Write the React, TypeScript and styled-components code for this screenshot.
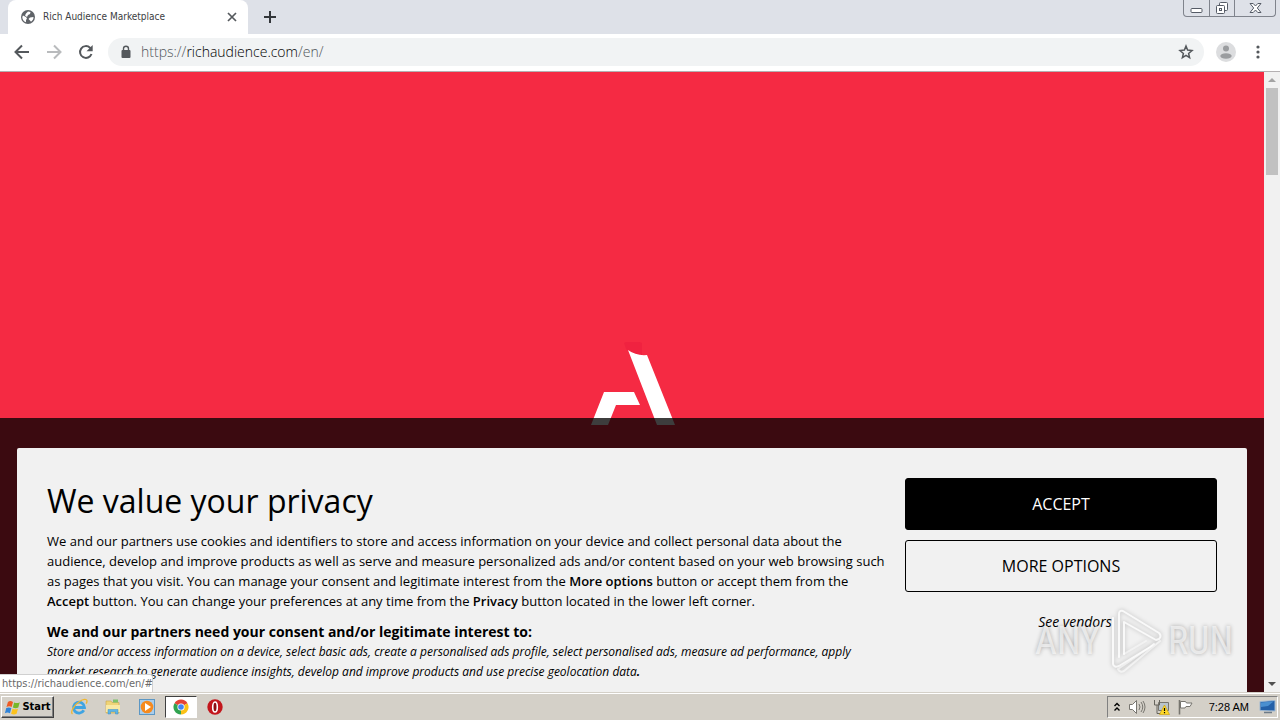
import React from "react";
import styled, { createGlobalStyle, css } from "styled-components";

const uiFont = '"Liberation Sans", Arial, sans-serif';
const tahomaLike = '"DejaVu Sans Condensed", "DejaVu Sans", Tahoma, sans-serif';

const GlobalStyle = createGlobalStyle`
  *, *::before, *::after { box-sizing: border-box; }
  body { margin: 0; background: #f1f1f1; }
  button, input { font: inherit; color: inherit; }
  svg { display: block; flex: none; }
`;

const Desktop = styled.div`
  display: flex;
  flex-direction: column;
  height: 100vh;
  overflow: hidden;
  font-family: ${tahomaLike};
`;

const PlainButton = styled.button`
  display: flex;
  align-items: center;
  justify-content: center;
  flex: none;
  padding: 0;
  border: 0;
  background: none;
`;

const TabStrip = styled.header`
  display: flex;
  align-items: flex-start;
  height: 34px;
  flex: none;
  padding-left: 8px;
  background: #dee1e8;
`;

const Tab = styled.div`
  display: flex;
  align-items: center;
  width: 240px;
  height: 34px;
  padding: 0 9px 0 13px;
  border-radius: 8px 8px 0 0;
  background: #fff;
`;

const TabTitle = styled.span`
  flex: 1;
  margin-left: 8px;
  white-space: nowrap;
  font-size: 10px;
  line-height: 16px;
  color: #3c4043;
`;

const NewTab = styled(PlainButton)`
  width: 28px;
  height: 34px;
  margin-left: 8px;
`;

const WindowControls = styled.div`
  display: flex;
  height: 17px;
  margin-left: auto;
  margin-right: 4px;
  border: 1px solid #7f838c;
  border-top: 0;
  border-radius: 0 0 4px 4px;
`;

const WindowButton = styled(PlainButton)<{ $wide?: boolean }>`
  width: ${(p) => (p.$wide ? 41 : 25)}px;
  & + & { border-left: 1px solid #7f838c; }
`;

const Toolbar = styled.nav`
  display: flex;
  align-items: center;
  height: 38px;
  flex: none;
  padding: 0 6px 1px;
  border-bottom: 1px solid #b4b0b2;
  background: #fff;
`;

const ToolButton = styled(PlainButton)`
  width: 32px;
  height: 32px;
`;

const AddressBar = styled.div`
  display: flex;
  align-items: center;
  flex: 1;
  height: 28px;
  margin: 0 6px 0 6px;
  padding: 0 9px 0 12px;
  border-radius: 14px;
  background: #f1f3f4;
`;

const Address = styled.a`
  flex: 1;
  margin-left: 9px;
  font-family: "Open Sans", sans-serif;
  font-weight: 300;
  font-size: 14px;
  line-height: 20px;
  color: #50555a;
  text-decoration: none;
  b { font-weight: 300; color: #000; }
`;

const Viewport = styled.main`
  display: flex;
  flex: 1;
  min-height: 0;
`;

const Page = styled.div`
  position: relative;
  display: flex;
  flex: 1;
  justify-content: center;
  min-width: 0;
  overflow: hidden;
  background: #f52a43;
`;

const BrandMark = styled.svg`
  margin-top: 270px;
`;

const Scrollbar = styled.div`
  display: flex;
  flex-direction: column;
  align-items: center;
  width: 16px;
  flex: none;
  background: #f1f1f1;
`;

const ScrollThumb = styled.div`
  width: 12px;
  height: 87px;
  margin-bottom: auto;
  background: #c1c1c1;
`;

const ScrollArrow = styled(PlainButton)`
  width: 16px;
  height: 16px;
`;

const Backdrop = styled.section`
  position: absolute;
  top: 346px;
  right: 0;
  bottom: 0;
  left: 0;
  padding: 30px 17px 0;
  background: rgba(0, 0, 0, 0.76);
`;

const Card = styled.div`
  display: flex;
  gap: 20px;
  height: 100%;
  padding: 30px;
  overflow: hidden;
  border-radius: 2px 2px 0 0;
  background: #f1f1f1;
  font-family: "Open Sans", sans-serif;
  color: #000;
`;

const Copy = styled.div`
  flex: 1;
  min-width: 0;
`;

const Heading = styled.h1`
  margin: 0 0 8px;
  font-weight: 400;
  font-size: 32px;
  line-height: 45px;
`;

const Body = styled.p`
  margin: 0 0 11px;
  font-size: 13px;
  line-height: 20px;
  b { font-weight: 600; }
`;

const Line = styled.span`
  display: block;
  white-space: nowrap;
`;

const Purpose = styled.h2`
  margin: 0;
  font-weight: 700;
  font-size: 14px;
  line-height: 20px;
`;

const Purposes = styled.p`
  margin: 0;
  font-size: 12px;
  line-height: 20px;
  font-style: italic;
`;

const Actions = styled.div`
  display: flex;
  flex-direction: column;
  gap: 10px;
  width: 312px;
  flex: none;
`;

const ActionButton = styled.button<{ $primary?: boolean }>`
  height: 52px;
  padding: 0;
  border: 1px solid #000;
  border-radius: 3px;
  font-size: 16px;
  line-height: 24px;
  ${(p) =>
    p.$primary
      ? css`background: #000; color: #fff;`
      : css`background: transparent; color: #000;`}
`;

const VendorsLink = styled.a`
  align-self: center;
  margin-top: 10px;
  margin-left: 28px;
  font-size: 14px;
  line-height: 20px;
  font-style: italic;
  color: #000;
  text-decoration: none;
`;

const StatusBubble = styled.div`
  position: absolute;
  left: 0;
  bottom: 0;
  width: 153px;
  height: 18px;
  padding-left: 2px;
  border-top: 1px solid #d0d0d0;
  border-right: 1px solid #d0d0d0;
  border-radius: 0 3px 0 0;
  background: #fff;
  font-size: 11px;
  line-height: 17px;
  white-space: nowrap;
  color: #6a6a6a;
`;

const Watermark = styled.div`
  position: absolute;
  right: 31px;
  bottom: 18px;
  display: flex;
  align-items: center;
  gap: 6px;
  font-family: "Liberation Sans Narrow", "Roboto Condensed", sans-serif;
  font-size: 38px;
  line-height: 66px;
  color: rgba(255, 255, 255, 0.6);
  text-shadow: 0 0 4px rgba(0, 0, 0, 0.3);
  pointer-events: none;
  svg { filter: drop-shadow(0 0 2px rgba(0, 0, 0, 0.3)); }
`;

const Taskbar = styled.footer`
  display: flex;
  align-items: center;
  height: 28px;
  flex: none;
  padding: 1px 2px 0 1px;
  border-top: 1px solid #d4d0c8;
  box-shadow: inset 0 1px 0 #fff;
  background: #d4d0c8;
`;

const StartButton = styled(PlainButton)`
  width: 53px;
  height: 22px;
  border: 1px solid;
  border-color: #fff #404040 #404040 #fff;
  box-shadow: inset -1px -1px 0 #808080;
  font-weight: 700;
  font-size: 11px;
  line-height: 16px;
  color: #000;
`;

const Shortcuts = styled.div`
  display: flex;
  gap: 2px;
  margin-left: 9px;
`;

const Shortcut = styled(PlainButton)<{ $active?: boolean }>`
  width: 32px;
  height: 22px;
  ${(p) =>
    p.$active &&
    css`
      border: 1px solid;
      border-color: #404040 #fff #fff #404040;
      background: #fff;
    `}
`;

const Tray = styled.div`
  display: flex;
  align-items: center;
  height: 22px;
  margin-left: auto;
  padding: 0 1px 0 5px;
  gap: 7px;
  border: 1px solid;
  border-color: #808080 #fff #fff #808080;
`;

const Clock = styled.time`
  margin: 0 3px 0 8px;
  font-family: ${uiFont};
  font-size: 11px;
  line-height: 16px;
  color: #000;
`;

const Globe = () => (
  <svg width="14" height="14" viewBox="0 0 14 14">
    <circle cx="7" cy="7" r="7" fill="#5f6368" />
    <path d="M2 5.500 5 7l1 1.500L5 10v2.200C2.700 11.500 1.300 9.500 1.300 7Zm5-4L9.500 2 9 4 7 5 6 7 4 5.500 5 3.500Zm2 6 3.500-.5c.2 2-1 3.800-2.500 4.700L9 10.500 7.500 9Z" fill="#fff" />
  </svg>
);

const WindowsFlag = () => (
  <svg width="18" height="17" viewBox="0 0 16 15">
    <path d="M3.500 2.500C5 1.500 6.500 1.700 8 2.500L6.800 7C5.300 6.200 3.800 6.200 2.200 7Z" fill="#ee5b24" />
    <path d="M9 3c1.700.8 3.300.8 5-.2l-1.300 4.700c-1.600.9-3.200.8-4.800 0Z" fill="#76b82a" />
    <path d="M2 8c1.500-.8 3-.8 4.500 0l-1.200 4.500C3.800 11.700 2.300 11.700.8 12.500Z" fill="#2f83d8" />
    <path d="M7.600 8.500c1.600.8 3.200.9 4.800 0l-1.200 4.500c-1.700 1-3.300.8-4.900 0Z" fill="#fcc21b" />
  </svg>
);

const IeIcon = () => (
  <svg width="18" height="18" viewBox="0 0 18 18">
    <path d="M13.800 12.300A5.500 5.500 0 1 1 14.500 9.500H5" fill="none" stroke="#3fa4e2" strokeWidth="2.800" />
    <path d="M2.500 16C0 14 4 7 9.500 3.500 13 1.200 17 .5 17 3c0 .8-.3 1.700-.8 2.600" fill="none" stroke="#f0b72f" strokeWidth="1.300" />
  </svg>
);

const FolderIcon = () => (
  <svg width="18" height="18" viewBox="0 0 18 18">
    <path d="M2 3h5l1 1.500h7V15H2Z" fill="#efd477" stroke="#c9a548" strokeWidth=".6" />
    <path d="M9 1.500h5v3H9Z" fill="#7fc26a" />
    <path d="M2 7h14v7H2Z" fill="#f9e9a4" />
    <path d="M4 16v-4.500h10V16h-2.500v-2.300h-5V16Z" fill="#5eb5e6" stroke="#3f8fc4" strokeWidth=".5" />
  </svg>
);

const MediaIcon = () => (
  <svg width="18" height="18" viewBox="0 0 18 18">
    <rect x="1.500" y="1.500" width="15" height="15" fill="#a9cdec" stroke="#5c97c4" />
    <circle cx="9" cy="9" r="6.300" fill="#f58a1f" />
    <path d="m7 5 6 4-6 4Z" fill="#fff" />
  </svg>
);

const ChromeIcon = () => (
  <svg width="16" height="16" viewBox="0 0 16 16">
    <path d="M8 8 1.500 4.250A7.500 7.500 0 0 1 14.500 4.250Z" fill="#e54335" />
    <path d="M8 8 1.500 4.250A7.500 7.500 0 0 0 8 15.500Z" fill="#31a350" />
    <path d="M8 8 14.500 4.250A7.500 7.500 0 0 1 8 15.500Z" fill="#fbc116" />
    <circle cx="8" cy="8" r="3.600" fill="#fff" />
    <circle cx="8" cy="8" r="2.800" fill="#4384f3" />
  </svg>
);

const OperaIcon = () => (
  <svg width="16" height="16" viewBox="0 0 16 16">
    <circle cx="8" cy="8" r="7.700" fill="#c3161c" />
    <ellipse cx="8" cy="8" rx="2.300" ry="5" fill="#8e0d12" stroke="#fff" strokeWidth="1.600" />
  </svg>
);

const PlayMark = () => (
  <svg width="56" height="66" viewBox="0 0 56 66" fill="none" stroke="#fff" strokeOpacity=".8" strokeWidth="2" strokeLinecap="round" strokeLinejoin="round">
    <path d="M13 49V6q0-4 4-3l36 22q3 3 0 6L50 32 18 14v32" />
    <path d="M7 10v46q1 4 6 2L44 39 48 36" />
    <path d="M54 33 18 63q-4 2-6-2l34-23" strokeOpacity=".6" />
    <path d="M18 46 40 33" strokeOpacity=".5" />
  </svg>
);

export default function App() {
  return (
    <Desktop>
      <GlobalStyle />
      <TabStrip>
        <Tab>
          <Globe />
          <TabTitle>Rich Audience Marketplace</TabTitle>
          <PlainButton aria-label="Close tab">
            <svg width="14" height="14" viewBox="0 0 14 14">
              <path d="m3 3 8 8m0-8-8 8" stroke="#55595d" strokeWidth="1.700" />
            </svg>
          </PlainButton>
        </Tab>
        <NewTab aria-label="New tab">
          <svg width="14" height="14" viewBox="0 0 14 14">
            <path d="M7 1v12M1 7h12" stroke="#33363a" strokeWidth="2" />
          </svg>
        </NewTab>
        <WindowControls>
          <WindowButton aria-label="Minimize">
            <svg width="13" height="16" viewBox="0 0 13 16">
              <rect x="1" y="8.500" width="11" height="4" rx="1" fill="#fff" stroke="#555b66" />
            </svg>
          </WindowButton>
          <WindowButton aria-label="Restore">
            <svg width="14" height="16" viewBox="0 0 14 16">
              <rect x="4.500" y="2.500" width="8" height="8" rx="1" fill="#fff" stroke="#555b66" />
              <rect x="1.500" y="5.500" width="8" height="8" rx="1" fill="#fff" stroke="#555b66" />
              <rect x="4.500" y="8.500" width="2" height="2" fill="#fff" stroke="#555b66" />
            </svg>
          </WindowButton>
          <WindowButton $wide aria-label="Close">
            <svg width="13" height="16" viewBox="0 0 13 16">
              <path d="M1 3.500h3.200L6.500 6l2.300-2.500H12L8.300 8l3.700 4.500H8.800L6.500 10l-2.300 2.500H1L4.700 8Z" fill="#fff" stroke="#555b66" />
            </svg>
          </WindowButton>
        </WindowControls>
      </TabStrip>

      <Toolbar>
        <ToolButton aria-label="Back">
          <svg width="16" height="16" viewBox="0 0 16 16" fill="none" stroke="#54585c" strokeWidth="2">
            <path d="M15 8H2M8 1.500 1.500 8 8 14.500" />
          </svg>
        </ToolButton>
        <ToolButton aria-label="Forward">
          <svg width="16" height="16" viewBox="0 0 16 16" fill="none" stroke="#b9bbbd" strokeWidth="2">
            <path d="M1 8h13M8 1.500 14.500 8 8 14.500" />
          </svg>
        </ToolButton>
        <ToolButton aria-label="Reload">
          <svg width="16" height="16" viewBox="0 0 16 16">
            <path d="M13.500 10A5.900 5.900 0 1 1 12 3.700L13 4.800" fill="none" stroke="#54585c" strokeWidth="2" />
            <path d="M14.700 1v6.300H8.500Z" fill="#54585c" />
          </svg>
        </ToolButton>
        <AddressBar>
          <svg width="12" height="14" viewBox="0 0 12 14">
            <rect x="1.500" y="5" width="9" height="8" rx="1" fill="#54585c" />
            <path d="M3.500 6V3.700a2.500 2.500 0 0 1 5 0V6" fill="none" stroke="#54585c" strokeWidth="1.400" />
          </svg>
          <Address href="#">https://<b>richaudience.com</b>/en/</Address>
          <PlainButton aria-label="Bookmark this page">
            <svg width="18" height="18" viewBox="0 0 18 18">
              <path d="m9 3 1.600 4.100 4.400.4-3.400 2.900 1 4.300L9 12.400l-3.600 2.300 1-4.300L3 7.500l4.400-.4Z" fill="none" stroke="#54585c" strokeWidth="1.500" />
            </svg>
          </PlainButton>
        </AddressBar>
        <ToolButton aria-label="Profile">
          <svg width="20" height="20" viewBox="0 0 20 20">
            <circle cx="10" cy="10" r="10" fill="#dcdddf" />
            <circle cx="10" cy="6.500" r="3" fill="#9a9c9f" />
            <ellipse cx="10" cy="14" rx="5.700" ry="2.800" fill="#9a9c9f" />
          </svg>
        </ToolButton>
        <ToolButton aria-label="Menu">
          <svg width="4" height="14" viewBox="0 0 4 14" fill="#54585c">
            <circle cx="2" cy="2" r="1.600" />
            <circle cx="2" cy="7" r="1.600" />
            <circle cx="2" cy="12" r="1.600" />
          </svg>
        </ToolButton>
      </Toolbar>

      <Viewport>
        <Page>
          <BrandMark width="86" height="84" viewBox="-3 0 86 84">
            <path d="M32 1q8-5 18 0v12q-9 0-16-6Z" fill="#ee203e" fillOpacity=".7" />
            <path d="M36 8q8 6 19 5l28 70H65Z" fill="#fff" />
            <path d="M12 50h30l6 13H24l-8 20H-1Z" fill="#fff" />
          </BrandMark>
          <Backdrop>
            <Card>
              <Copy>
                <Heading>We value your privacy</Heading>
                <Body>
                  <Line>
                    We and our partners use cookies and identifiers to store and access information on
                    your device and collect personal data about the
                  </Line>
                  <Line>
                    audience, develop and improve products as well as serve and measure personalized ads
                    and/or content based on your web browsing such
                  </Line>
                  <Line>
                    as pages that you visit. You can manage your consent and legitimate interest from
                    the <b>More options</b> button or accept them from the
                  </Line>
                  <Line>
                    <b>Accept</b> button. You can change your preferences at any time from
                    the <b>Privacy</b> button located in the lower left corner.
                  </Line>
                </Body>
                <Purpose>We and our partners need your consent and/or legitimate interest to:</Purpose>
                <Purposes>
                  <Line>
                    Store and/or access information on a device, select basic ads, create a personalised
                    ads profile, select personalised ads, measure ad performance, apply
                  </Line>
                  <Line>
                    market research to generate audience insights, develop and improve products and use
                    precise geolocation data<b>.</b>
                  </Line>
                </Purposes>
              </Copy>
              <Actions>
                <ActionButton $primary>ACCEPT</ActionButton>
                <ActionButton>MORE OPTIONS</ActionButton>
                <VendorsLink href="#">See vendors</VendorsLink>
              </Actions>
            </Card>
          </Backdrop>
          <Watermark>
            <span>ANY</span>
            <PlayMark />
            <span>RUN</span>
          </Watermark>
          <StatusBubble>https://richaudience.com/en/#</StatusBubble>
        </Page>
        <Scrollbar>
          <ScrollArrow aria-label="Scroll up">
            <svg width="8" height="4" viewBox="0 0 8 4"><path d="m0 4 4-4 4 4Z" fill="#a3a3a3" /></svg>
          </ScrollArrow>
          <ScrollThumb />
          <ScrollArrow aria-label="Scroll down">
            <svg width="8" height="4" viewBox="0 0 8 4"><path d="m0 0 4 4 4-4Z" fill="#505050" /></svg>
          </ScrollArrow>
        </Scrollbar>
      </Viewport>

      <Taskbar>
        <StartButton>
          <WindowsFlag />
          Start
        </StartButton>
        <Shortcuts>
          <Shortcut aria-label="Internet Explorer"><IeIcon /></Shortcut>
          <Shortcut aria-label="Explorer"><FolderIcon /></Shortcut>
          <Shortcut aria-label="Media Player"><MediaIcon /></Shortcut>
          <Shortcut $active aria-label="Chrome"><ChromeIcon /></Shortcut>
          <Shortcut aria-label="Opera"><OperaIcon /></Shortcut>
        </Shortcuts>
        <Tray>
          <svg width="8" height="10" viewBox="0 0 8 10" fill="none" stroke="#000" strokeWidth="1.400">
            <path d="m1.500 4 2.500-2.500L6.500 4m-5 4.500L4 6l2.500 2.500" />
          </svg>
          <svg width="18" height="16" viewBox="0 0 18 16" fill="none" stroke="#77756f">
            <path d="M1.500 5.500h3l4-4v13l-4-4h-3Z" fill="#fff" />
            <path d="M11 5q2 3 0 6m2-8q3.500 5 0 10m2-11q4 6 0 12" />
          </svg>
          <svg width="17" height="16" viewBox="0 0 17 16">
            <path d="M5.500 3.500h10v8h-10Z" fill="#b9c4cc" stroke="#77756f" />
            <path d="M1.500 1v5h5V1M4 6v8.500h5" fill="none" stroke="#66645e" />
            <path d="m11.500 6 5 9.500h-10Z" fill="#ffd928" stroke="#c79b00" strokeWidth=".6" />
            <path d="M11.500 9v3m0 1v1.300" stroke="#000" strokeWidth="1.200" />
          </svg>
          <svg width="17" height="16" viewBox="0 0 17 16">
            <path d="M2.500 1v14.500" stroke="#77756f" strokeWidth="1.600" />
            <path d="M3.500 2.500h5l1 1.500h5.500l-2 3.500H9L8 9H3.500Z" fill="#fff" stroke="#77756f" />
          </svg>
          <Clock>7:28 AM</Clock>
          <svg width="17" height="16" viewBox="0 0 17 16">
            <path d="M1 2.500 16 1.500V12L1 11.500Z" fill="#2460a8" stroke="#9fb9d3" />
            <path d="M2 3.500 14.500 2.500 9 7 2 8Z" fill="#4a8fd0" />
            <path d="M5 13.500h8" stroke="#6d7b88" strokeWidth="1.500" />
          </svg>
        </Tray>
      </Taskbar>
    </Desktop>
  );
}
